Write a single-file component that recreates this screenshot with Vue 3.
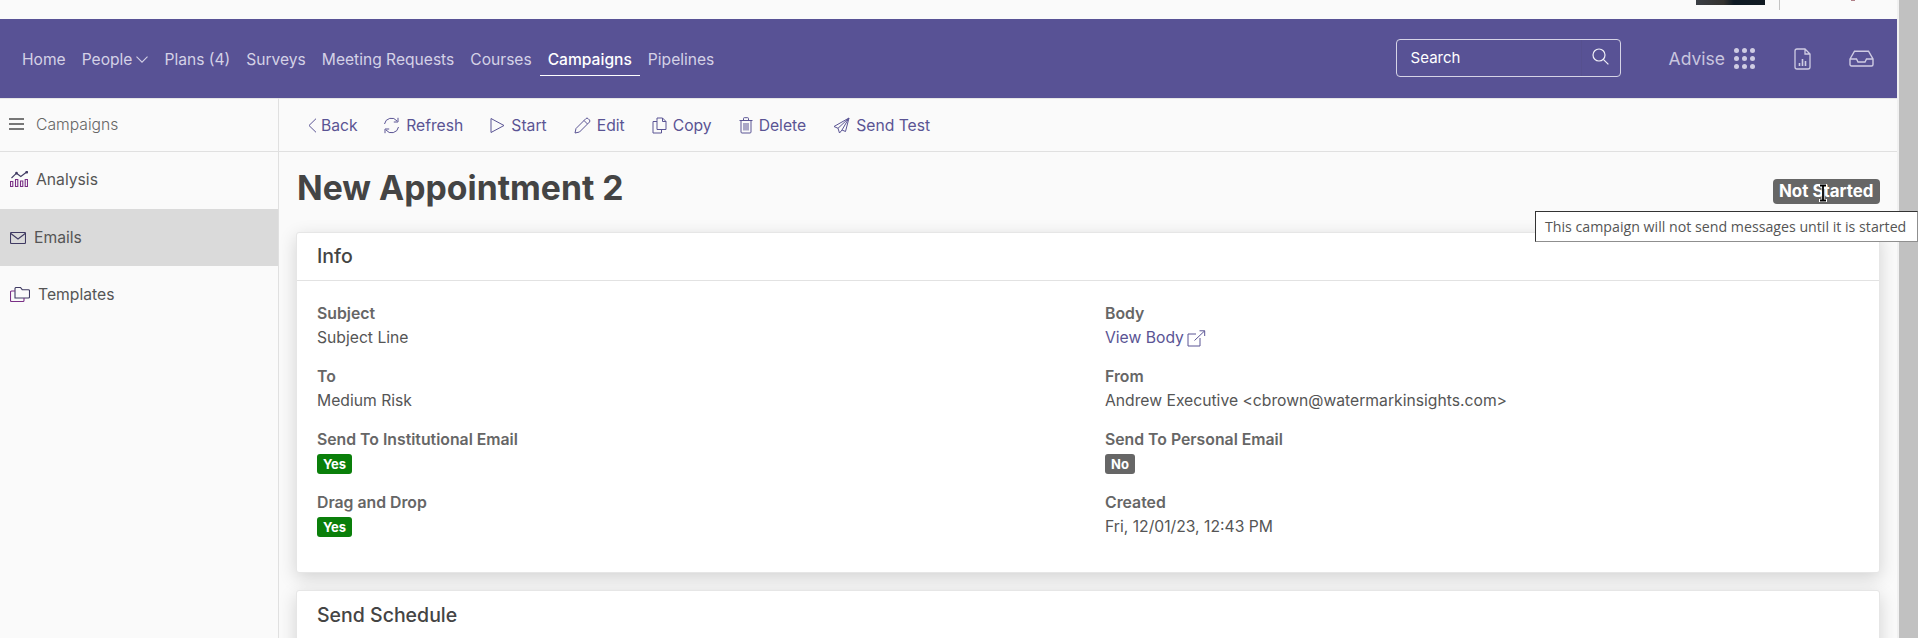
<template>
  <div class="page">
    <div class="app">
      <div class="top-strip">
        <span class="avatar"></span>
        <span class="divider"></span>
        <span class="mark"></span>
      </div>

      <header class="navbar">
        <nav class="nav-links">
          <a v-for="link in navLinks" :key="link.label" class="nav-link" :class="{ active: link.active }">
            <span>{{ link.label }}</span>
            <svg v-if="link.caret" class="caret" width="12" height="7" viewBox="0 0 12 7"><path d="M.5.7 6 6.2 11.5.7" /></svg>
          </a>
        </nav>
        <div class="search">
          <span class="search-text">Search</span>
          <span class="search-btn">
            <svg width="17" height="17" viewBox="0 0 17 17"><circle cx="7" cy="7" r="6" /><path d="M11.3 11.3 16.4 16.4" /></svg>
          </span>
        </div>
        <div class="advise">Advise</div>
        <div class="dots"><i v-for="n in 9" :key="n"></i></div>
        <svg class="doc-icon" width="17" height="22" viewBox="0 0 17 22">
          <path d="M11 1H3a2 2 0 0 0-2 2v16a2 2 0 0 0 2 2h11a2 2 0 0 0 2-2V6zM11 1v5h5" />
          <path class="bars" d="M5.5 18v-3M8.5 18v-7M11.5 18v-5" />
        </svg>
        <svg class="inbox-icon" width="25" height="17" viewBox="0 0 25 17">
          <path d="M1 9 5.5 1.2h14L24 9v5.5a1.5 1.5 0 0 1-1.5 1.5h-20A1.5 1.5 0 0 1 1 14.500zM1 9h6.500l1.500 3h7l1.500-3H24" />
        </svg>
      </header>

      <div class="body-row">
        <aside class="sidebar">
          <div class="side-head">
            <svg width="15" height="12" viewBox="0 0 15 12"><path d="M0 1h15M0 6h15M0 11h15" /></svg>
            <span>Campaigns</span>
          </div>
          <a class="side-item analysis">
            <svg class="side-icon" width="18" height="16" viewBox="0 0 18 16">
              <path class="purple" d="M.5 10.500h2.300v5H.5zM5.500 8.500h2.300v7H5.500zM10.500 10h2.300v5.500h-2.300zM15.200 8.500h2.300v7h-2.300z" />
              <path d="M1.500 7 6.500 2.200l4.300 3.300L16.700 1" />
              <circle cx="6.500" cy="2.200" r=".8" />
              <circle cx="16.700" cy="1.200" r=".8" />
            </svg>
            <span>Analysis</span>
          </a>
          <a class="side-item current">
            <svg class="side-icon" width="16" height="12" viewBox="0 0 16 12">
              <rect x=".5" y=".5" width="15" height="11" rx="1" />
              <path d="M.8 1.500 8 7l7.200-5.500" />
            </svg>
            <span>Emails</span>
          </a>
          <a class="side-item">
            <svg class="side-icon" width="20" height="15" viewBox="0 0 20 15">
              <path d="M5 11V1.500a1 1 0 0 1 1-1h4.500l1.700 2.200h6.300a1 1 0 0 1 1 .900V10a1 1 0 0 1-1 1z" />
              <path class="purple" d="M5 4H1.500a1 1 0 0 0-1 1v8.500a1 1 0 0 0 1 1h11.500a1 1 0 0 0 1-1V11" />
            </svg>
            <span>Templates</span>
          </a>
        </aside>

        <main class="content">
          <div class="toolbar">
            <a v-for="tool in tools" :key="tool.label" class="tool">
              <svg :width="tool.w" :height="tool.h" :viewBox="`0 0 ${tool.w} ${tool.h}`"><path :d="tool.d" /></svg>
              <span>{{ tool.label }}</span>
            </a>
          </div>

          <div class="title-row">
            <h1>New Appointment 2</h1>
            <span class="status">Not Started</span>
          </div>

          <section class="card">
            <h2>Info</h2>
            <div class="fields">
              <div v-for="field in fields" :key="field.label" class="field">
                <div class="field-label">{{ field.label }}</div>
                <a v-if="field.link" class="body-link">
                  <span>{{ field.value }}</span>
                  <svg width="19" height="17" viewBox="0 0 19 17"><path d="M13 8v8H1V4h8M7.500 10.500 17.500 1M12.500.8h5.200V6" /></svg>
                </a>
                <span v-else-if="field.badge" class="badge" :class="field.badge">{{ field.value }}</span>
                <div v-else class="field-value">{{ field.value }}</div>
              </div>
            </div>
          </section>

          <section class="card next">
            <h2>Send Schedule</h2>
          </section>
        </main>
      </div>
    </div>

    <div class="scrollbar"><div class="thumb"></div></div>

    <div class="tooltip">This campaign will not send messages until it is started</div>
    <svg class="cursor" width="10" height="18" viewBox="0 0 10 18">
      <path class="cursor-halo" d="M1 1.500h8M1 16.500h8M5 1v16" />
      <path class="cursor-line" d="M2 1.500h6M2 16.500h6M5 1v16" />
    </svg>
  </div>
</template>

<script setup>
const navLinks = [
  { label: 'Home' },
  { label: 'People', caret: true },
  { label: 'Plans (4)' },
  { label: 'Surveys' },
  { label: 'Meeting Requests' },
  { label: 'Courses' },
  { label: 'Campaigns', active: true },
  { label: 'Pipelines' },
]

const tools = [
  { label: 'Back', w: 9, h: 15, d: 'M8 .7 1 7.500 8 14.300' },
  { label: 'Refresh', w: 17, h: 17, d: 'M1.500 7A7 7 0 0 1 14 4M15 .8V5h-4.200M15.500 10A7 7 0 0 1 3 13M2 16.200V12h4.200' },
  { label: 'Start', w: 15, h: 17, d: 'M1 1.500V15.500L14 8.500z' },
  { label: 'Edit', w: 17, h: 17, d: 'M12 1.500a1.500 1.500 0 0 1 2 0l1.500 1.500a1.500 1.500 0 0 1 0 2L5.500 15 1 16l1-4.500zM10 3.500l3.500 3.500' },
  { label: 'Copy', w: 15, h: 17, d: 'M5 3.500V1h5.500L14 4.500V12.500H5zM10.500 1v3.500H14M5 4.500H1V16h8.500v-3.500' },
  { label: 'Delete', w: 14, h: 17, d: 'M.5 3.500h13M2 3.500V15a1 1 0 0 0 1 1h8a1 1 0 0 0 1-1V3.500M4.500 3.500V1.500a.8.8 0 0 1 .8-.8h3.400a.8.8 0 0 1 .8.8v2M5 6v7.500M7 6v7.500M9 6v7.500' },
  { label: 'Send Test', w: 17, h: 17, d: 'M16 1 1 9.500l4 1.800L6.500 16l2.500-3 3.500 1.500zM16 1 5 11.300M16 1 9 13' },
]

const fields = [
  { label: 'Subject', value: 'Subject Line' },
  { label: 'Body', value: 'View Body', link: true },
  { label: 'To', value: 'Medium Risk' },
  { label: 'From', value: 'Andrew Executive <cbrown@watermarkinsights.com>' },
  { label: 'Send To Institutional Email', value: 'Yes', badge: 'green' },
  { label: 'Send To Personal Email', value: 'No', badge: 'grey' },
  { label: 'Drag and Drop', value: 'Yes', badge: 'green' },
  { label: 'Created', value: 'Fri, 12/01/23, 12:43 PM' },
]
</script>

<style>
html,
body {
  margin: 0;
  overflow: hidden;
}
</style>

<style scoped>
.page {
  position: relative;
  display: flex;
  width: 1918px;
  height: 638px;
  overflow: hidden;
  background: #fafafa;
  font-family: Inter, "Liberation Sans", sans-serif;
  font-size: 15.7px;
  color: #555;
}

.app {
  width: 1897px;
  flex: none;
}

.top-strip {
  display: flex;
  height: 19px;
  align-items: flex-start;
  justify-content: flex-end;
}

.avatar {
  width: 69px;
  height: 5px;
  background: linear-gradient(90deg, #3b3f45, #34322f 40%, #0e1a24 55%, #111a22);
}

.divider {
  width: 1px;
  height: 10px;
  margin: 0 71px 0 14px;
  background: #c4c4c4;
}

.mark {
  width: 4px;
  height: 1px;
  margin-right: 42px;
  background: #b08088;
}

.navbar {
  display: flex;
  height: 79px;
  align-items: center;
  background: #585295;
  color: #d4d1e6;
}

.nav-links {
  display: flex;
  align-items: center;
  flex: 1;
  padding-left: 14px;
  font-size: 15.600px;
}

.nav-link {
  display: flex;
  align-items: center;
  height: 35px;
  padding: 2px 8px 0;
  box-sizing: border-box;
  border-bottom: 1px solid transparent;
  white-space: nowrap;
}

.nav-link.active {
  border-bottom-color: #fff;
  color: #fff;
  font-weight: 500;
}

.caret {
  margin-left: 4px;
  margin-top: 1px;
  fill: none;
  stroke: #d4d1e6;
  stroke-width: 1.1;
}

.search {
  display: flex;
  width: 225px;
  height: 38px;
  box-sizing: border-box;
  margin-top: -2px;
  border: 1px solid #d6d4e6;
  border-radius: 4px;
  color: #fff;
  font-size: 15px;
}

.search-text {
  flex: 1;
  padding-left: 14px;
  line-height: 35px;
}

.search-btn {
  display: flex;
  width: 38px;
  align-items: center;
  justify-content: center;
  border-left: 1px solid #56508f;
}

.search-btn svg {
  margin-top: -2px;
  fill: none;
  stroke: #f0eff7;
  stroke-width: 1.2;
}

.advise {
  margin-left: 48px;
  font-size: 17.500px;
  color: #c9c6df;
}

.dots {
  display: grid;
  grid-template-columns: repeat(3, 5px);
  gap: 3px;
  margin-left: 9px;
  margin-top: -1px;
}

.dots i {
  width: 5px;
  height: 5px;
  border-radius: 50%;
  background: #cfcce3;
}

.doc-icon {
  margin-left: 39px;
  fill: none;
  stroke: #cfcce3;
  stroke-width: 1.3;
}

.doc-icon .bars {
  stroke-width: 1.6;
}

.inbox-icon {
  margin-left: 38px;
  margin-right: 23px;
  fill: none;
  stroke: #cfcce3;
  stroke-width: 1.4;
}

.body-row {
  display: flex;
  height: 540px;
}

.sidebar {
  width: 278px;
  flex: none;
  border-right: 1px solid #e0e0e0;
}

.side-head {
  display: flex;
  height: 54px;
  box-sizing: border-box;
  align-items: center;
  gap: 12px;
  padding-left: 9px;
  padding-bottom: 2px;
  border-top: 1px solid #e6e6e6;
  border-bottom: 1px solid #e0e0e0;
  color: #666;
  font-weight: 300;
}

.side-head svg {
  flex: none;
  stroke: #777;
  stroke-width: 1.9;
}

.side-item {
  display: flex;
  height: 57px;
  align-items: center;
  gap: 8px;
  padding-left: 10px;
}

.side-item.analysis {
  box-sizing: border-box;
  padding-bottom: 3px;
}

.side-item.current {
  background: #dadada;
}

.side-icon {
  flex: none;
  fill: none;
  stroke: #3f3a62;
  stroke-width: 1.100;
}

.side-icon .purple {
  stroke: #7a2f86;
}

.content {
  flex: 1;
  min-width: 0;
}

.toolbar {
  display: flex;
  height: 54px;
  box-sizing: border-box;
  align-items: center;
  gap: 27px;
  padding-left: 29px;
  border-top: 1px solid #e6e6e6;
  border-bottom: 1px solid #e0e0e0;
  color: #5a5494;
}

.tool {
  display: flex;
  align-items: center;
  gap: 6px;
}

.tool:first-child {
  gap: 4px;
  margin-right: -1.500px;
}

.tool svg {
  fill: none;
  stroke: #5a5494;
  stroke-width: 1;
}

.title-row {
  display: flex;
  height: 80px;
  box-sizing: border-box;
  align-items: flex-start;
  justify-content: space-between;
  padding: 15px 17px 0 18px;
}

h1 {
  margin: 0;
  font-size: 33.750px;
  font-weight: 700;
  line-height: 42px;
  color: #444;
}

.status {
  margin-top: 12px;
  padding: 0 6.500px;
  border-radius: 4px;
  background: #666;
  color: #fff;
  font-size: 16.900px;
  font-weight: 700;
  line-height: 25px;
}

.card {
  margin: 0 17px 17px;
  border: 1px solid #e6e6e6;
  border-radius: 3px;
  background: #fff;
  box-shadow: 0 5px 18px rgba(0, 0, 0, 0.16);
}

.card.next {
  height: 100px;
}

h2 {
  margin: 0;
  padding: 0 20px;
  height: 47px;
  border-bottom: 1px solid #e2e2e2;
  font-size: 19.500px;
  font-weight: 500;
  line-height: 47px;
  color: #444;
}

.next h2 {
  border-bottom: 0;
  line-height: 49px;
}

.fields {
  display: grid;
  grid-template-columns: 788px 1fr;
  grid-auto-rows: 63px;
  padding: 21px 20px 18px;
}

.field-label {
  height: 24px;
  font-size: 15.800px;
  font-weight: 600;
  line-height: 24px;
  color: #666;
}

.field-value,
.body-link {
  line-height: 24px;
}

.body-link {
  display: flex;
  align-items: center;
  gap: 3px;
  color: #5a5494;
  white-space: nowrap;
}

.body-link svg {
  fill: none;
  stroke: #5a5494;
  stroke-width: 1;
}

.badge {
  display: inline-block;
  margin-top: 2px;
  padding: 0 6px;
  border-radius: 3px;
  color: #fff;
  font-size: 13px;
  font-weight: 700;
  line-height: 20px;
}

.badge.green {
  background: #0a7f0a;
}

.badge.grey {
  background: #666;
}

.scrollbar {
  flex: 1;
  display: flex;
  justify-content: flex-end;
  background: #f1f1f1;
}

.thumb {
  width: 19px;
  background: #c1c1c1;
}

.tooltip {
  position: absolute;
  top: 211px;
  left: 1535px;
  right: 0;
  height: 31px;
  box-sizing: border-box;
  padding-left: 9px;
  border: 1px solid #8f8f8f;
  border-top-color: #333;
  border-left-color: #333;
  background: #fff;
  color: #555;
  font-family: "Open Sans", "Noto Sans", sans-serif;
  font-size: 14.200px;
  line-height: 29px;
  white-space: nowrap;
}

.cursor {
  position: absolute;
  top: 184px;
  left: 1818px;
}

.cursor-halo {
  fill: none;
  stroke: #fff;
  stroke-width: 3;
}

.cursor-line {
  fill: none;
  stroke: #000;
  stroke-width: 1.800;
}
</style>
